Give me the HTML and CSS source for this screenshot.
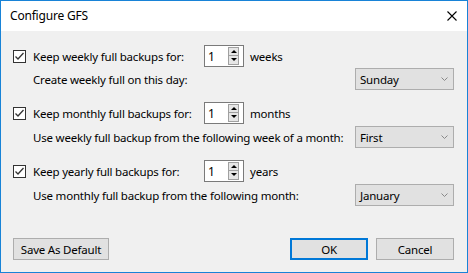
FILE: index.html
```html
<!DOCTYPE html>
<html>
<head>
<meta charset="utf-8">
<link rel="stylesheet" href="styles.css">
</head>
<body>
<div class="window">
  <div class="titlebar">
    <span class="title">Configure GFS</span>
    <svg class="close" width="10" height="10" viewBox="0 0 10 10"><path d="M0.5 0.5 L9.5 9.5 M9.5 0.5 L0.5 9.5" stroke="#000" stroke-width="1.1" fill="none"/></svg>
  </div>
  <div class="content">
    <div class="group">
      <div class="row-a">
        <span class="check"><svg width="11" height="11" viewBox="0 0 11 11"><path d="M1.5 5.5 L4 8 L9.5 2" stroke="#333" stroke-width="1.3" fill="none"/></svg></span>
        <span class="label">Keep weekly full backups for:</span>
        <span class="spin"><span class="val">1</span><span class="btns"><span class="btn up"></span><span class="btn down"></span></span></span>
        <span class="unit">weeks</span>
      </div>
      <div class="row-b b-first">
        <span class="sublabel">Create weekly full on this day:</span>
        <span class="combo"><span>Sunday</span><svg width="7" height="4" viewBox="0 0 7 4"><path d="M0.5 0.5 L3.5 3.5 L6.5 0.5" stroke="#888" stroke-width="1" fill="none"/></svg></span>
      </div>
    </div>
    <div class="group">
      <div class="row-a">
        <span class="check"><svg width="11" height="11" viewBox="0 0 11 11"><path d="M1.5 5.5 L4 8 L9.5 2" stroke="#333" stroke-width="1.3" fill="none"/></svg></span>
        <span class="label">Keep monthly full backups for:</span>
        <span class="spin"><span class="val">1</span><span class="btns"><span class="btn up"></span><span class="btn down"></span></span></span>
        <span class="unit">months</span>
      </div>
      <div class="row-b">
        <span class="sublabel">Use weekly full backup from the following week of a month:</span>
        <span class="combo"><span>First</span><svg width="7" height="4" viewBox="0 0 7 4"><path d="M0.5 0.5 L3.5 3.5 L6.5 0.5" stroke="#888" stroke-width="1" fill="none"/></svg></span>
      </div>
    </div>
    <div class="group">
      <div class="row-a">
        <span class="check"><svg width="11" height="11" viewBox="0 0 11 11"><path d="M1.5 5.5 L4 8 L9.5 2" stroke="#333" stroke-width="1.3" fill="none"/></svg></span>
        <span class="label">Keep yearly full backups for:</span>
        <span class="spin"><span class="val">1</span><span class="btns"><span class="btn up"></span><span class="btn down"></span></span></span>
        <span class="unit">years</span>
      </div>
      <div class="row-b">
        <span class="sublabel">Use monthly full backup from the following month:</span>
        <span class="combo"><span>January</span><svg width="7" height="4" viewBox="0 0 7 4"><path d="M0.5 0.5 L3.5 3.5 L6.5 0.5" stroke="#888" stroke-width="1" fill="none"/></svg></span>
      </div>
    </div>
    <div class="footer">
      <button class="button save">Save As Default</button>
      <div class="right">
        <button class="button ok">OK</button>
        <button class="button cancel">Cancel</button>
      </div>
    </div>
  </div>
</div>
</body>
</html>
```
FILE: styles.css
```css
* { box-sizing: border-box; }
html, body { margin: 0; padding: 0; }
body {
  font-family: "Noto Sans", "DejaVu Sans", sans-serif;
  font-size: 11.5px;
  letter-spacing: -0.2px;
  color: #000;
  background: #fff;
}
.window {
  width: 468px;
  height: 273px;
  border: 1px solid #1883d7;
  display: flex;
  flex-direction: column;
  background: #f0f0f0;
}
.titlebar {
  height: 30px;
  background: #fff;
  display: flex;
  align-items: center;
  padding-left: 9px;
  padding-right: 10px;
}
.title { flex: 1; line-height: 16px; font-size: 12px; }
.close { display: block; }
.content {
  flex: 1;
  display: flex;
  flex-direction: column;
  padding: 14px 13px 12px 11px;
}
.group + .group { margin-top: 12px; }
.row-a {
  display: flex;
  align-items: center;
  height: 22px;
}
.check {
  width: 13px;
  height: 13px;
  border: 1px solid #333;
  background: #fff;
  display: flex;
  align-items: center;
  justify-content: center;
  margin-left: 1px;
}
.check svg { display: block; }
.label {
  margin-left: 7px;
  width: 171px;
  white-space: nowrap;
}
.spin {
  width: 40px;
  height: 22px;
  border: 1px solid #7a7a7a;
  background: #fff;
  display: flex;
  align-items: center;
  padding-left: 3px;
  padding-right: 4px;
}
.val { flex: 1; font-size: 12px; }
.btns {
  display: flex;
  flex-direction: column;
  width: 11px;
}
.btn {
  height: 9px;
  background: #e6e6e6;
  border: 1px solid #a0a0a0;
  position: relative;
}
.btn.down { border-top: none; }
.btn::after {
  content: "";
  position: absolute;
  left: 2px;
  width: 0;
  height: 0;
  border-left: 3px solid transparent;
  border-right: 3px solid transparent;
}
.btn.up::after { top: 2px; border-bottom: 3px solid #000; }
.btn.down::after { top: 2px; border-top: 3px solid #000; }
.unit { margin-left: 6px; }
.row-b {
  display: flex;
  align-items: center;
  height: 22px;
  margin-top: 2px;
}
.row-b.b-first { margin-top: 1px; }
.sublabel { margin-left: 21px; white-space: nowrap; }
.combo {
  margin-left: auto;
  width: 99px;
  height: 22px;
  background: #e1e1e1;
  border: 1px solid #adadad;
  display: flex;
  align-items: center;
  justify-content: space-between;
  padding-left: 4px;
  padding-right: 5px;
}
.combo svg { display: block; }
.footer {
  margin-top: auto;
  display: flex;
  justify-content: space-between;
  align-items: flex-end;
  padding-left: 1px;
  padding-right: 0;
}
.right { display: flex; gap: 8px; }
.button {
  font-family: inherit;
  font-size: 11.5px;
  letter-spacing: -0.2px;
  color: #000;
  height: 22px;
  background: #e1e1e1;
  border: 1px solid #adadad;
  padding: 0;
  margin: 0;
}
.save { width: 96px; }
.ok { width: 78px; border: 2px solid #0078d7; }
.cancel { width: 78px; }
```
